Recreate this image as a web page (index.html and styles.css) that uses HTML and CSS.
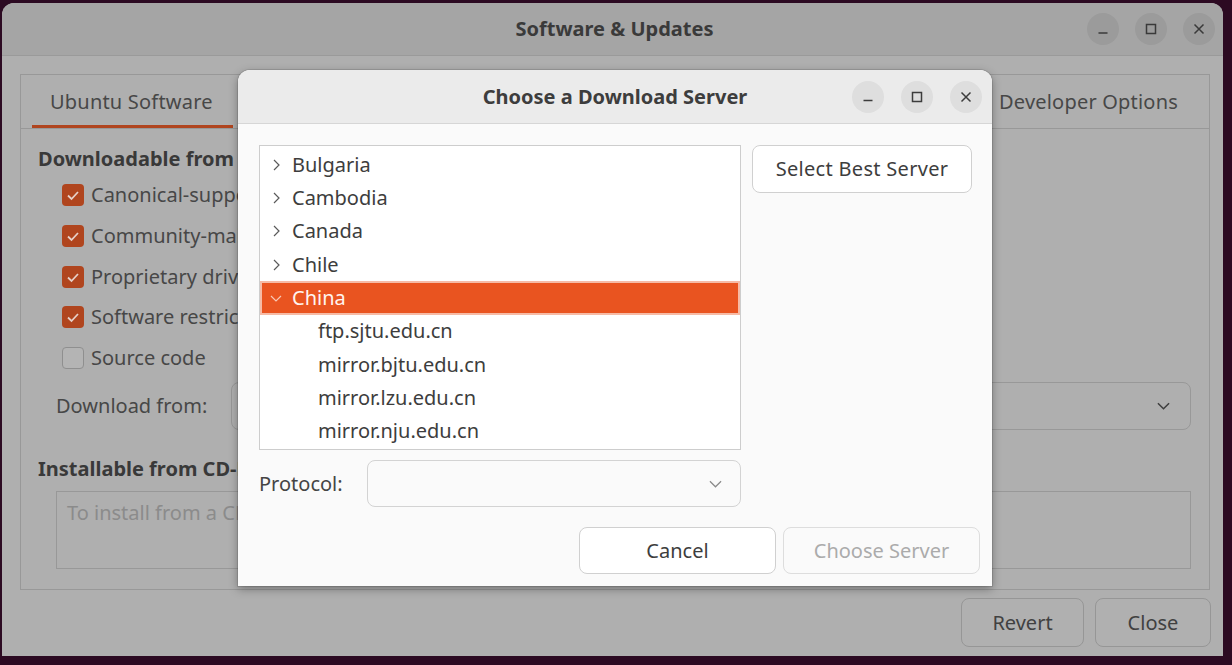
FILE: index.html
```html
<!DOCTYPE html>
<html>
<head>
<meta charset="utf-8">
<title>Software &amp; Updates</title>
<link rel="stylesheet" href="styles.css">
</head>
<body>
<div class="desktop">
  <div class="window">
    <header class="titlebar">
      <div></div>
      <div class="title">Software &amp; Updates</div>
      <div class="wbtns">
        <span class="wbtn"><svg viewBox="0 0 16 16"><path d="M3.5 12h9" /></svg></span>
        <span class="wbtn"><svg viewBox="0 0 16 16"><rect x="3.5" y="3.5" width="9" height="9" /></svg></span>
        <span class="wbtn"><svg viewBox="0 0 16 16"><path d="M3.5 3.5l9 9M12.5 3.5l-9 9" /></svg></span>
      </div>
    </header>
    <div class="winbody">
      <div class="notebook">
        <div class="tabs">
          <div class="tab active">Ubuntu Software</div>
          <div class="tab">Other Software</div>
          <div class="tab">Updates</div>
          <div class="tab">Authentication</div>
          <div class="tab">Additional Drivers</div>
          <div class="tab">Developer Options</div>
        </div>
        <div class="page">
          <div class="section-title">Downloadable from the Internet</div>
          <div class="checks">
            <div class="check"><span class="box on"><svg viewBox="0 0 22 22"><path d="M6 11.5l3.5 3.5 6.5-7" /></svg></span>Canonical-supported free and open-source software (main)</div>
            <div class="check"><span class="box on"><svg viewBox="0 0 22 22"><path d="M6 11.5l3.5 3.5 6.5-7" /></svg></span>Community-maintained free and open-source software (universe)</div>
            <div class="check"><span class="box on"><svg viewBox="0 0 22 22"><path d="M6 11.5l3.5 3.5 6.5-7" /></svg></span>Proprietary drivers for devices (restricted)</div>
            <div class="check"><span class="box on"><svg viewBox="0 0 22 22"><path d="M6 11.5l3.5 3.5 6.5-7" /></svg></span>Software restricted by copyright or legal issues (multiverse)</div>
            <div class="check"><span class="box"></span>Source code</div>
          </div>
          <div class="dlrow">
            <span class="dllabel">Download from:</span>
            <div class="combo">
              <span>Server for China</span>
              <svg viewBox="0 0 14 8"><path d="M1 1l6 6 6-6" /></svg>
            </div>
          </div>
          <div class="section-title cd">Installable from CD-ROM/DVD</div>
          <div class="cdbox">To install from a CD-ROM or DVD, insert the medium into the drive.</div>
        </div>
      </div>
      <div class="actions">
        <button class="mbtn revert">Revert</button>
        <button class="mbtn close">Close</button>
      </div>
    </div>
  </div>

  <div class="dialog">
    <header class="dhead">
      <div></div>
      <div class="dtitle">Choose a Download Server</div>
      <div class="dbtns">
        <span class="dbtn"><svg viewBox="0 0 16 16"><path d="M3.5 11.5h9" /></svg></span>
        <span class="dbtn"><svg viewBox="0 0 16 16"><rect x="3.5" y="3.5" width="9" height="9" /></svg></span>
        <span class="dbtn"><svg viewBox="0 0 16 16"><path d="M3.5 3.5l9 9M12.5 3.5l-9 9" /></svg></span>
      </div>
    </header>
    <div class="dtop">
      <div class="dleft">
        <div class="tree">
          <div class="row"><svg viewBox="0 0 16 16"><path d="M6 3l5 5-5 5" /></svg>Bulgaria</div>
          <div class="row"><svg viewBox="0 0 16 16"><path d="M6 3l5 5-5 5" /></svg>Cambodia</div>
          <div class="row"><svg viewBox="0 0 16 16"><path d="M6 3l5 5-5 5" /></svg>Canada</div>
          <div class="row"><svg viewBox="0 0 16 16"><path d="M6 3l5 5-5 5" /></svg>Chile</div>
          <div class="row sel"><svg viewBox="0 0 16 16"><path d="M3 6l5 5 5-5" /></svg>China</div>
          <div class="row child">ftp.sjtu.edu.cn</div>
          <div class="row child">mirror.bjtu.edu.cn</div>
          <div class="row child">mirror.lzu.edu.cn</div>
          <div class="row child">mirror.nju.edu.cn</div>
        </div>
        <div class="protorow">
          <span class="plabel">Protocol:</span>
          <div class="pcombo"><svg viewBox="0 0 14 8"><path d="M1 1l6 6 6-6" /></svg></div>
        </div>
      </div>
      <button class="bestbtn">Select Best Server</button>
    </div>
    <div class="dactions">
      <button class="dbtn2">Cancel</button>
      <button class="dbtn2 disabled">Choose Server</button>
    </div>
  </div>
</div>
</body>
</html>
```

FILE: styles.css
```css
* { box-sizing: border-box; }

html, body {
  margin: 0;
  padding: 0;
}

body {
  width: 1232px;
  height: 665px;
  overflow: hidden;
  background: #2c0a22;
  font-family: "Noto Sans", "DejaVu Sans", sans-serif;
  font-size: 20px;
  line-height: 24px;
  color: #454545;
}

.desktop {
  position: relative;
  height: 665px;
  padding: 3px 9px 0 2px;
}

/* ---------- main window (dimmed) ---------- */
.window {
  width: 1221px;
  height: 653px;
  background: #afafaf;
  border-radius: 12px 12px 0 0;
  display: flex;
  flex-direction: column;
  overflow: hidden;
}

.titlebar {
  height: 53px;
  flex: none;
  background: #a5a5a5;
  border-bottom: 1px solid #9a9a9a;
  display: grid;
  grid-template-columns: 1fr auto 1fr;
  align-items: center;
}

.title {
  font-weight: bold;
  color: #3a3a3a;
  padding-left: 4px;
}

.wbtns {
  justify-self: end;
  display: flex;
  gap: 16px;
  padding-right: 8px;
}

.wbtn {
  width: 32px;
  height: 32px;
  border-radius: 50%;
  background: #9b9b9b;
  display: flex;
  align-items: center;
  justify-content: center;
}

.wbtn svg, .dbtn svg {
  width: 16px;
  height: 16px;
  fill: none;
  stroke: #3a3a3a;
  stroke-width: 1.5;
}

.winbody {
  flex: 1;
  padding: 18px 12px 0 18px;
  display: flex;
  flex-direction: column;
}

.notebook {
  height: 516px;
  margin-right: 1px;
  border: 1px solid #989898;
  display: flex;
  flex-direction: column;
}

.tabs {
  height: 54px;
  flex: none;
  border-bottom: 1px solid #989898;
  display: flex;
  justify-content: space-between;
  padding: 0 11px;
}

.tab {
  padding: 0 20px 0 18px;
  display: flex;
  align-items: center;
  color: #474747;
  white-space: nowrap;
  letter-spacing: 0.2px;
}

.tab.active {
  box-shadow: inset 0 -3px 0 #b0451f;
}

.page {
  flex: 1;
  padding: 18px 18px 0 17px;
  overflow: hidden;
}

.section-title {
  font-weight: bold;
  color: #393939;
  white-space: nowrap;
}

.section-title.cd {
  margin-top: 27px;
}

.checks {
  margin-top: 4px;
  padding-left: 24px;
}

.check {
  height: 40.7px;
  display: flex;
  align-items: center;
  gap: 7px;
  white-space: nowrap;
  color: #474747;
}

.box {
  width: 22px;
  height: 22px;
  flex: none;
  border-radius: 4px;
  border: 1px solid #8f8f8f;
  background: #b4b4b4;
}

.box.on {
  border: none;
  background: #b0451e;
}

.box svg {
  width: 22px;
  height: 22px;
  display: block;
  fill: none;
  stroke: #e6d0c8;
  stroke-width: 1.8;
}

.dlrow {
  margin-top: 4px;
  height: 48px;
  display: flex;
  align-items: center;
  padding-left: 18px;
}

.dllabel {
  width: 175px;
  flex: none;
  color: #474747;
}

.combo {
  flex: 1;
  height: 48px;
  border: 1px solid #989898;
  border-radius: 8px;
  display: flex;
  align-items: center;
  justify-content: space-between;
  padding: 0 20px 0 14px;
  color: #474747;
}

.combo svg, .pcombo svg {
  width: 13px;
  height: 8px;
  fill: none;
  stroke: #3e3e3e;
  stroke-width: 1.6;
}

.cdbox {
  margin: 10px 0 0 18px;
  height: 78px;
  border: 1px solid #989898;
  padding: 9px 10px;
  color: #8b8b8b;
  white-space: nowrap;
  overflow: hidden;
}

.actions {
  display: flex;
  justify-content: flex-end;
  gap: 11px;
  margin-top: 8px;
}

.mbtn {
  height: 49px;
  padding: 0;
  font: inherit;
  color: #414141;
  background: #b0b0b0;
  border: 1px solid #969696;
  border-radius: 8px;
}

.mbtn.revert { width: 123px; }
.mbtn.close { width: 116px; }

/* ---------- dialog ---------- */
.dialog {
  position: absolute;
  left: 238px;
  top: 70px;
  width: 754px;
  height: 516px;
  background: #fafafa;
  border-radius: 12px 12px 0 0;
  box-shadow: 0 3px 10px rgba(0, 0, 0, 0.35), 0 0 0 1px rgba(0, 0, 0, 0.1);
  display: flex;
  flex-direction: column;
  overflow: hidden;
}

.dhead {
  height: 54px;
  flex: none;
  background: #ebebeb;
  border-bottom: 1px solid #d6d6d6;
  display: grid;
  grid-template-columns: 1fr auto 1fr;
  align-items: center;
}

.dtitle {
  font-weight: bold;
  color: #3d3d3d;
}

.dbtns {
  justify-self: end;
  display: flex;
  gap: 17px;
  padding-right: 10px;
}

.dbtn {
  width: 32px;
  height: 32px;
  border-radius: 50%;
  background: #dedede;
  display: flex;
  align-items: center;
  justify-content: center;
}

.dbtn svg {
  stroke: #3d3d3d;
}

.dtop {
  padding: 21px 20px 0 21px;
  display: grid;
  grid-template-columns: 482px 1fr;
  column-gap: 11px;
  align-items: start;
}

.tree {
  height: 305px;
  background: #ffffff;
  border: 1px solid #cdcdcd;
  padding-top: 2px;
  overflow: hidden;
}

.row {
  height: 33.33px;
  display: flex;
  align-items: center;
  padding-left: 8px;
  color: #3d3d3d;
  white-space: nowrap;
}

.row svg {
  width: 16px;
  height: 16px;
  margin-right: 8px;
  fill: none;
  stroke: #5a5a5a;
  stroke-width: 1.2;
}

.row.child {
  padding-left: 58px;
}

.row.sel {
  background: #e95420;
  color: #fff4ef;
  box-shadow: inset 0 0 0 2px #f6bba6;
}

.row.sel svg {
  stroke: #f8c8b6;
}

.protorow {
  margin-top: 10px;
  height: 47px;
  display: flex;
  align-items: center;
}

.plabel {
  width: 108px;
  flex: none;
  color: #454545;
}

.pcombo {
  flex: 1;
  height: 47px;
  border: 1px solid #d3d3d3;
  border-radius: 8px;
  background: #fafafa;
  display: flex;
  align-items: center;
  justify-content: flex-end;
  padding-right: 18px;
}

.pcombo svg {
  stroke: #8a8a8a;
  stroke-width: 1.3;
}

.bestbtn {
  height: 48px;
  font: inherit;
  letter-spacing: 0.3px;
  color: #3d3d3d;
  background: #ffffff;
  border: 1px solid #d0d0d0;
  border-radius: 8px;
}

.dactions {
  display: flex;
  justify-content: flex-end;
  gap: 7px;
  padding: 20px 12px 12px 0;
}

.dbtn2 {
  width: 197px;
  height: 47px;
  font: inherit;
  color: #3d3d3d;
  background: #ffffff;
  border: 1px solid #d0d0d0;
  border-radius: 8px;
}

.dbtn2.disabled {
  color: #ababab;
  background: #fafafa;
  border-color: #dddddd;
}
```
